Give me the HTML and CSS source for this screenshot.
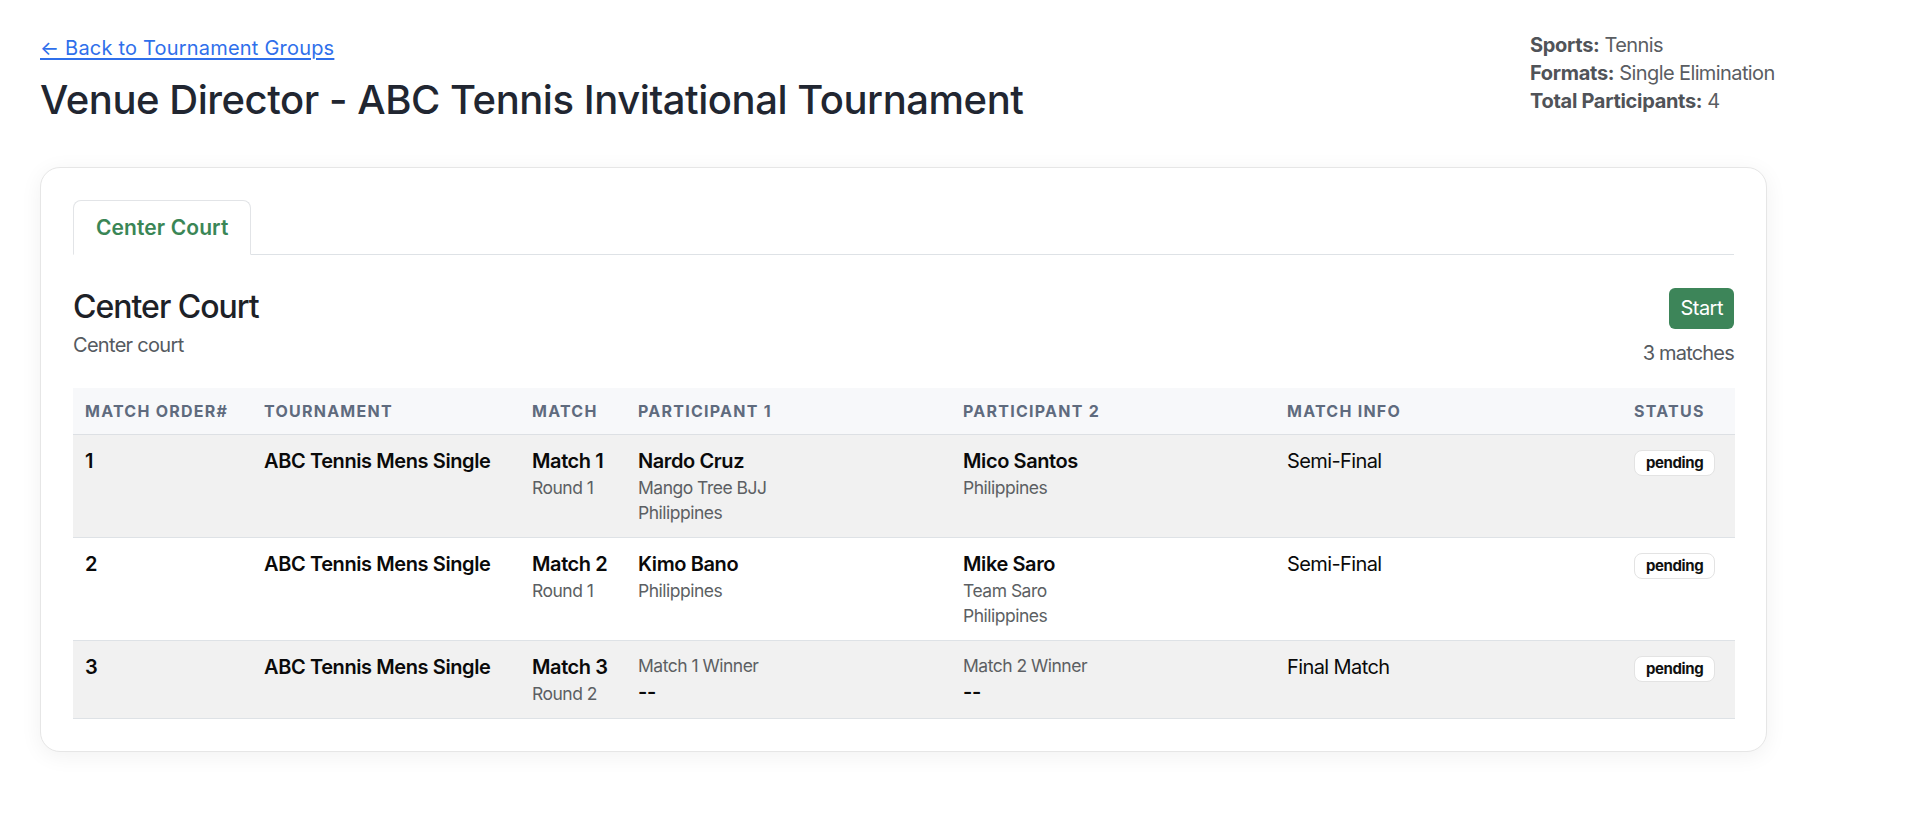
FILE: index.html
```html
<!DOCTYPE html>
<html lang="en">
<head>
<meta charset="utf-8">
<title>Venue Director - ABC Tennis Invitational Tournament</title>
<link rel="stylesheet" href="styles.css">
</head>
<body>
<div class="page">
  <header class="top">
    <div class="top-left">
      <a class="back" href="#">← Back to Tournament Groups</a>
      <h1 class="title">Venue Director - ABC Tennis Invitational Tournament</h1>
    </div>
    <div class="meta">
      <div><b>Sports:</b> Tennis</div>
      <div><b>Formats:</b> Single Elimination</div>
      <div><b>Total Participants:</b> 4</div>
    </div>
  </header>

  <section class="card">
    <nav class="tabs">
      <a class="tab active" href="#">Center Court</a>
    </nav>

    <div class="court-head">
      <div>
        <h2 class="court-title">Center Court</h2>
        <div class="court-desc">Center court</div>
      </div>
      <div class="court-actions">
        <button class="btn-start">Start</button>
        <div class="count">3 matches</div>
      </div>
    </div>

    <table class="matches">
      <colgroup>
        <col class="w-order"><col class="w-tour"><col class="w-match"><col class="w-p1"><col class="w-p2"><col class="w-info"><col class="w-status">
      </colgroup>
      <thead>
        <tr>
          <th>Match Order#</th>
          <th>Tournament</th>
          <th>Match</th>
          <th>Participant 1</th>
          <th>Participant 2</th>
          <th>Match Info</th>
          <th>Status</th>
        </tr>
      </thead>
      <tbody>
        <tr class="odd">
          <td><div class="strong">1</div></td>
          <td><div class="strong">ABC Tennis Mens Single</div></td>
          <td><div class="strong">Match 1</div><div class="sub">Round 1</div></td>
          <td><div class="strong">Nardo Cruz</div><div class="sub">Mango Tree BJJ</div><div class="sub">Philippines</div></td>
          <td><div class="strong">Mico Santos</div><div class="sub">Philippines</div></td>
          <td><div class="plain">Semi-Final</div></td>
          <td><span class="badge">pending</span></td>
        </tr>
        <tr>
          <td><div class="strong">2</div></td>
          <td><div class="strong">ABC Tennis Mens Single</div></td>
          <td><div class="strong">Match 2</div><div class="sub">Round 1</div></td>
          <td><div class="strong">Kimo Bano</div><div class="sub">Philippines</div></td>
          <td><div class="strong">Mike Saro</div><div class="sub">Team Saro</div><div class="sub">Philippines</div></td>
          <td><div class="plain">Semi-Final</div></td>
          <td><span class="badge">pending</span></td>
        </tr>
        <tr class="odd">
          <td><div class="strong">3</div></td>
          <td><div class="strong">ABC Tennis Mens Single</div></td>
          <td><div class="strong">Match 3</div><div class="sub">Round 2</div></td>
          <td><div class="sub">Match 1 Winner</div><div class="strong">--</div></td>
          <td><div class="sub">Match 2 Winner</div><div class="strong">--</div></td>
          <td><div class="plain">Final Match</div></td>
          <td><span class="badge">pending</span></td>
        </tr>
      </tbody>
    </table>
  </section>
</div>
</body>
</html>
```

FILE: styles.css
```css
* { box-sizing: border-box; }

html, body {
  margin: 0;
  padding: 0;
  background: #ffffff;
}

body {
  font-family: Inter, "Noto Sans", "Liberation Sans", sans-serif;
  color: #212529;
  font-size: 20px;
  line-height: 30px;
}

.page {
  width: 1777px;
  padding: 31px 0 40px 40px;
}

/* ---------- page header ---------- */
.top {
  display: flex;
  justify-content: space-between;
  align-items: flex-start;
}

.back {
  display: block;
  margin-top: 2px;
  color: #2f6feb;
  text-decoration: underline;
  text-underline-offset: 3px;
  font-size: 20px;
  line-height: 30px;
  letter-spacing: 0.2px;
  width: max-content;
}

.title {
  margin: 13px 0 0 0;
  font-size: 40px;
  line-height: 48px;
  font-weight: 500;
  color: #212631;
  letter-spacing: -0.45px;
}

.meta {
  width: 247px;
  color: #5a5d62;
  font-size: 20px;
  line-height: 28px;
  letter-spacing: -0.6px;
  white-space: nowrap;
}

.meta b {
  font-weight: 700;
  color: #505358;
  letter-spacing: -0.3px;
}

/* ---------- card ---------- */
.card {
  margin-top: 43px;
  width: 1727px;
  border: 1px solid #e6e6e6;
  border-radius: 20px;
  background: #fff;
  padding: 32px;
  box-shadow: 0 4px 22px rgba(0, 0, 0, 0.06);
}

.tabs {
  display: flex;
  border-bottom: 1px solid #dee2e6;
}

.tab {
  display: block;
  margin-bottom: -1px;
  padding: 12px 22px 11px;
  border: 1px solid #e2e4e7;
  border-bottom-color: #fff;
  border-radius: 8px 8px 0 0;
  background: #fff;
  color: #3a8656;
  font-weight: 600;
  font-size: 21px;
  line-height: 30px;
  letter-spacing: 0.1px;
  text-decoration: none;
}

.court-head {
  display: flex;
  justify-content: space-between;
  align-items: flex-start;
  margin-top: 33px;
}

.court-title {
  margin: 0;
  font-size: 32px;
  line-height: 38px;
  font-weight: 500;
  color: #1d2127;
  letter-spacing: -1px;
}

.court-desc {
  margin-top: 4px;
  color: #555a60;
  font-size: 20px;
  line-height: 30px;
  letter-spacing: -0.7px;
}

.court-actions {
  display: flex;
  flex-direction: column;
  align-items: flex-end;
}

.btn-start {
  border: none;
  border-radius: 6px;
  background: #3d8559;
  color: #fff;
  font-family: inherit;
  font-size: 20px;
  line-height: 29px;
  letter-spacing: -0.5px;
  padding: 6px 11px;
}

.count {
  margin-top: 9px;
  color: #555a60;
  font-size: 20px;
  line-height: 30px;
  letter-spacing: -0.8px;
}

/* ---------- table ---------- */
.matches {
  margin-top: 20px;
  width: 100%;
  border-collapse: collapse;
  table-layout: fixed;
}

.w-order { width: 179px; }
.w-tour { width: 268px; }
.w-match { width: 106px; }
.w-p1 { width: 325px; }
.w-p2 { width: 324px; }
.w-info { width: 347px; }
.w-status { width: 113px; }

.matches th {
  background: #f7f8fa;
  text-align: left;
  text-transform: uppercase;
  font-size: 16px;
  line-height: 22px;
  font-weight: 700;
  letter-spacing: 1.25px;
  color: #5f6b7e;
  padding: 12px;
  border-bottom: 1px solid #dde0e4;
  white-space: nowrap;
}

.matches td {
  vertical-align: top;
  padding: 12px;
  border-bottom: 1px solid #dee2e6;
}

.matches tr.odd td {
  background: #f1f1f1;
}

.strong {
  font-weight: 600;
  font-size: 20px;
  line-height: 28px;
  letter-spacing: -0.4px;
  color: #0a0a0a;
}

.plain {
  font-size: 20px;
  line-height: 28px;
  letter-spacing: -0.6px;
  color: #0a0a0a;
}

.sub {
  font-size: 17.5px;
  line-height: 25px;
  letter-spacing: -0.5px;
  color: #5c5f63;
}

.badge {
  display: inline-block;
  vertical-align: top;
  margin-top: 3px;
  padding: 3px 11px;
  border: 1px solid #e3e3e3;
  border-radius: 8px;
  background: #fff;
  color: #111;
  font-size: 15px;
  line-height: 18px;
  font-weight: 700;
  letter-spacing: -0.4px;
}
```
